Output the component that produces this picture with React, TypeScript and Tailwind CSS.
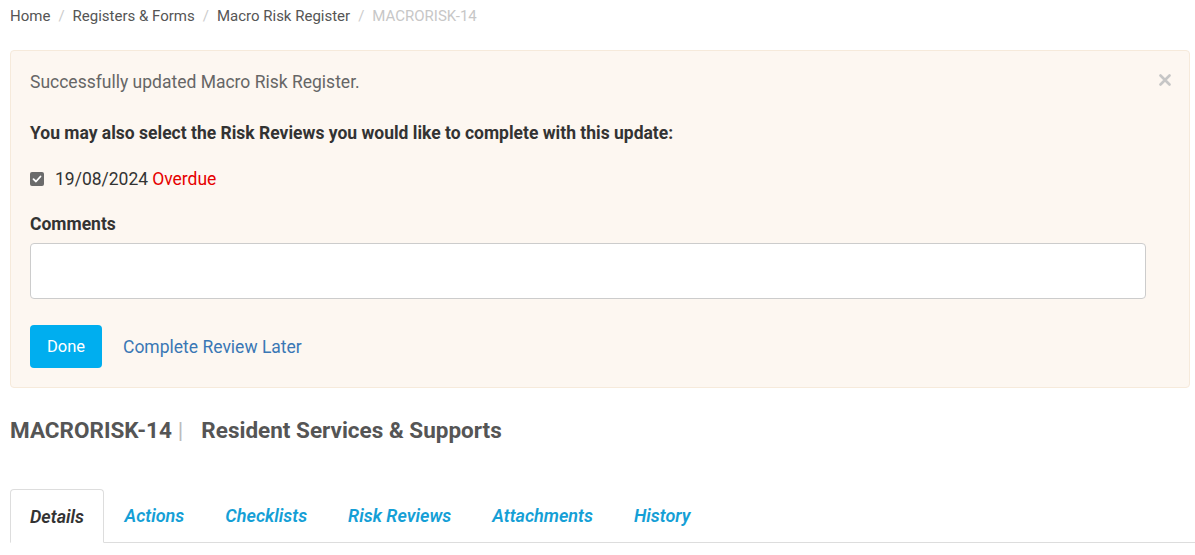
import React from "react";

const tabs = ["Details", "Actions", "Checklists", "Risk Reviews", "Attachments", "History"];

const Breadcrumb = () => {
  const items = ["Home", "Registers & Forms", "Macro Risk Register"];
  return (
    <div className="flex items-center h-[32px] px-[10px] text-[15px] text-[#555]">
      {items.map((item) => (
        <React.Fragment key={item}>
          <span>{item}</span>
          <span className="text-[#ccc] px-[8px]">/</span>
        </React.Fragment>
      ))}
      <span className="text-[#c7c7c7]">MACRORISK-14</span>
    </div>
  );
};

const ReviewAlert = () => (
  <div className="relative ml-[10px] mr-[5px] mt-[18px] rounded-[4px] border border-[#f6eadb] bg-[#fdf7f1] px-[19px] pt-[19px] pb-[19px]">
    <button className="absolute right-[18px] top-[23px]">
      <svg width="12" height="12" viewBox="0 0 12 12">
        <path d="M1.5 1.5 L10.5 10.5 M10.5 1.5 L1.5 10.5" stroke="#c6c6c6" strokeWidth="2.6" strokeLinecap="round" />
      </svg>
    </button>
    <p className="text-[17.5px] leading-[24px] text-[#666]">Successfully updated Macro Risk Register.</p>
    <p className="mt-[27px] text-[17.5px] leading-[24px] font-bold text-[#333]">
      You may also select the Risk Reviews you would like to complete with this update:
    </p>
    <label className="mt-[22px] flex items-center h-[24px] text-[17.5px] text-[#333]">
      <span className="flex items-center justify-center w-[14px] h-[14px] rounded-[2px] bg-[#6b6b6b] mr-[11px]">
        <svg width="10" height="10" viewBox="0 0 10 10">
          <path d="M1.5 5.2 L4 7.5 L8.5 2.5" fill="none" stroke="white" strokeWidth="1.8" strokeLinecap="round" strokeLinejoin="round" />
        </svg>
      </span>
      19/08/2024 <span className="ml-[4px] text-[#e60000]">Overdue</span>
    </label>
    <p className="mt-[21px] text-[17.5px] leading-[24px] font-bold text-[#333]">Comments</p>
    <div className="mt-[7px] mr-[24px] h-[56px] rounded-[4px] border border-[#ccc] bg-white" />
    <div className="mt-[26px] flex items-center">
      <button className="h-[43px] w-[72px] pt-[2px] rounded-[4px] bg-[#00aeef] text-[16.5px] text-white">Done</button>
      <span className="ml-[21px] pt-[2px] text-[17.5px] text-[#3a77b5]">Complete Review Later</span>
    </div>
  </div>
);

export default function App() {
  return (
    <div className="w-[1195px] h-[555px] overflow-hidden bg-white" style={{ fontFamily: "Roboto, 'Liberation Sans', sans-serif" }}>
      <Breadcrumb />
      <ReviewAlert />
      <div className="mt-[27px] px-[10px] flex items-center h-[32px] text-[22.5px] font-bold text-[#555]">
        <span>MACRORISK-14</span>
        <span className="ml-[6px] font-normal text-[#bbb]">|</span>
        <span className="ml-[18px]">Resident Services &amp; Supports</span>
      </div>
      <div className="mt-[42px] ml-[10px] flex items-end border-b border-[#ddd] h-[54px]">
        {tabs.map((t, i) =>
          i === 0 ? (
            <div
              key={t}
              className="-mb-px h-[54px] px-[19px] flex items-center rounded-t-[4px] border border-[#ddd] border-b-white bg-white text-[18px] font-semibold italic text-[#333]"
            >
              {t}
            </div>
          ) : (
            <div key={t} className="h-[54px] px-[20.5px] flex items-center text-[18px] font-semibold italic text-[#159fd6]">
              {t}
            </div>
          )
        )}
      </div>
    </div>
  );
}
